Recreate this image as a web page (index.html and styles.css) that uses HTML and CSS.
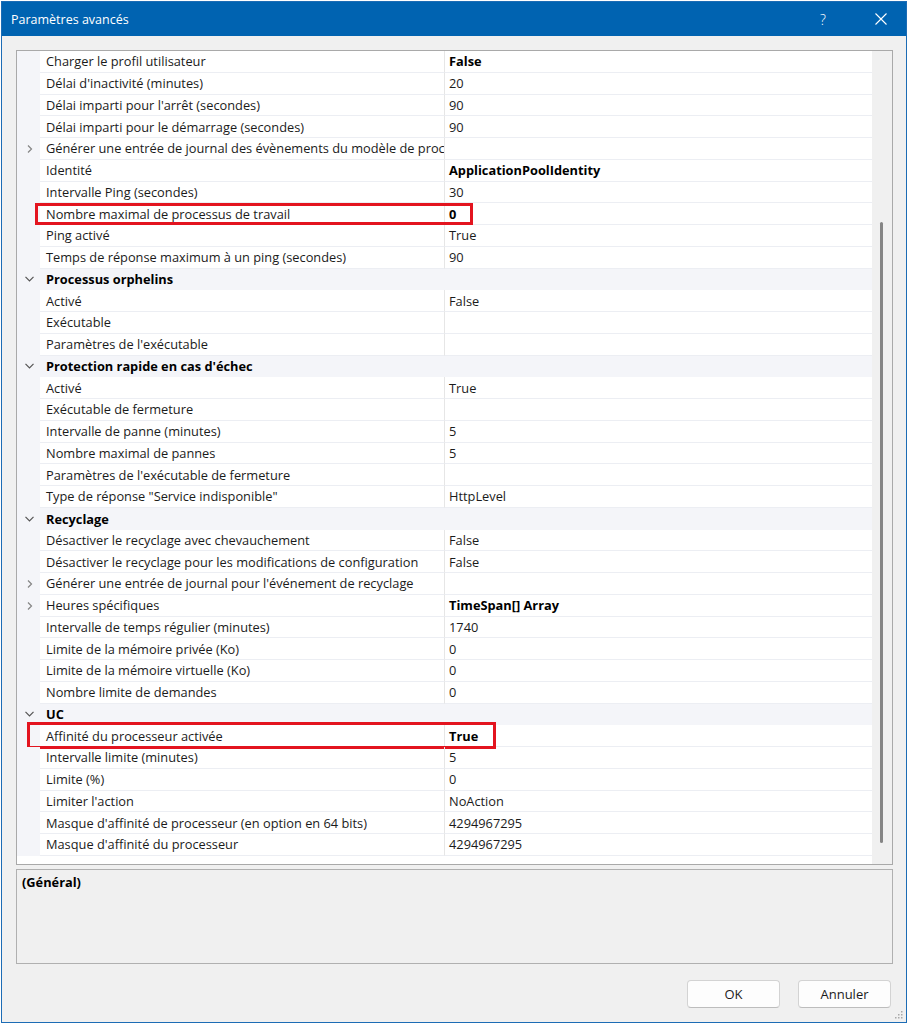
FILE: index.html
```html
<!DOCTYPE html>
<html lang="fr">
<head>
<meta charset="utf-8">
<title>Paramètres avancés</title>
<link rel="stylesheet" href="styles.css">
</head>
<body>
<div class="window">
  <div class="titlebar">
    <span class="title">Paramètres avancés</span>
    <span class="help">?</span>
    <span class="close"><svg width="12" height="12" viewBox="0 0 12 12"><path d="M0.5 0.5 L11.5 11.5 M11.5 0.5 L0.5 11.5" stroke="#fff" stroke-width="1.1" fill="none"/></svg></span>
  </div>
  <div class="content">
    <div class="grid">
      <div class="rows">
        <div class="row"><div class="gut"></div><div class="name">Charger le profil utilisateur</div><div class="val b">False</div></div>
        <div class="row"><div class="gut"></div><div class="name">Délai d'inactivité (minutes)</div><div class="val">20</div></div>
        <div class="row"><div class="gut"></div><div class="name">Délai imparti pour l'arrêt (secondes)</div><div class="val">90</div></div>
        <div class="row"><div class="gut"></div><div class="name">Délai imparti pour le démarrage (secondes)</div><div class="val">90</div></div>
        <div class="row"><div class="gut"><svg class="exp" width="6" height="8" viewBox="0 0 6 8"><path d="M1 0.5 L4.5 4 L1 7.5" stroke="#858585" stroke-width="1.2" fill="none"/></svg></div><div class="name">Générer une entrée de journal des évènements du modèle de proc</div><div class="val"></div></div>
        <div class="row"><div class="gut"></div><div class="name">Identité</div><div class="val b">ApplicationPoolIdentity</div></div>
        <div class="row"><div class="gut"></div><div class="name">Intervalle Ping (secondes)</div><div class="val">30</div></div>
        <div class="row mark1"><div class="gut"></div><div class="name">Nombre maximal de processus de travail</div><div class="val b">0</div></div>
        <div class="row"><div class="gut"></div><div class="name">Ping activé</div><div class="val">True</div></div>
        <div class="row"><div class="gut"></div><div class="name">Temps de réponse maximum à un ping (secondes)</div><div class="val">90</div></div>
        <div class="row cat"><div class="gut"><svg class="col" width="9" height="6" viewBox="0 0 9 6"><path d="M0.5 0.8 L4.5 4.8 L8.5 0.8" stroke="#555" stroke-width="1.2" fill="none"/></svg></div><div class="name">Processus orphelins</div></div>
        <div class="row"><div class="gut"></div><div class="name">Activé</div><div class="val">False</div></div>
        <div class="row"><div class="gut"></div><div class="name">Exécutable</div><div class="val"></div></div>
        <div class="row"><div class="gut"></div><div class="name">Paramètres de l'exécutable</div><div class="val"></div></div>
        <div class="row cat"><div class="gut"><svg class="col" width="9" height="6" viewBox="0 0 9 6"><path d="M0.5 0.8 L4.5 4.8 L8.5 0.8" stroke="#555" stroke-width="1.2" fill="none"/></svg></div><div class="name">Protection rapide en cas d'échec</div></div>
        <div class="row"><div class="gut"></div><div class="name">Activé</div><div class="val">True</div></div>
        <div class="row"><div class="gut"></div><div class="name">Exécutable de fermeture</div><div class="val"></div></div>
        <div class="row"><div class="gut"></div><div class="name">Intervalle de panne (minutes)</div><div class="val">5</div></div>
        <div class="row"><div class="gut"></div><div class="name">Nombre maximal de pannes</div><div class="val">5</div></div>
        <div class="row"><div class="gut"></div><div class="name">Paramètres de l'exécutable de fermeture</div><div class="val"></div></div>
        <div class="row"><div class="gut"></div><div class="name">Type de réponse "Service indisponible"</div><div class="val">HttpLevel</div></div>
        <div class="row cat"><div class="gut"><svg class="col" width="9" height="6" viewBox="0 0 9 6"><path d="M0.5 0.8 L4.5 4.8 L8.5 0.8" stroke="#555" stroke-width="1.2" fill="none"/></svg></div><div class="name">Recyclage</div></div>
        <div class="row"><div class="gut"></div><div class="name">Désactiver le recyclage avec chevauchement</div><div class="val">False</div></div>
        <div class="row"><div class="gut"></div><div class="name">Désactiver le recyclage pour les modifications de configuration</div><div class="val">False</div></div>
        <div class="row"><div class="gut"><svg class="exp" width="6" height="8" viewBox="0 0 6 8"><path d="M1 0.5 L4.5 4 L1 7.5" stroke="#858585" stroke-width="1.2" fill="none"/></svg></div><div class="name">Générer une entrée de journal pour l'événement de recyclage</div><div class="val"></div></div>
        <div class="row"><div class="gut"><svg class="exp" width="6" height="8" viewBox="0 0 6 8"><path d="M1 0.5 L4.5 4 L1 7.5" stroke="#858585" stroke-width="1.2" fill="none"/></svg></div><div class="name">Heures spécifiques</div><div class="val b">TimeSpan[] Array</div></div>
        <div class="row"><div class="gut"></div><div class="name">Intervalle de temps régulier (minutes)</div><div class="val">1740</div></div>
        <div class="row"><div class="gut"></div><div class="name">Limite de la mémoire privée (Ko)</div><div class="val">0</div></div>
        <div class="row"><div class="gut"></div><div class="name">Limite de la mémoire virtuelle (Ko)</div><div class="val">0</div></div>
        <div class="row"><div class="gut"></div><div class="name">Nombre limite de demandes</div><div class="val">0</div></div>
        <div class="row cat"><div class="gut"><svg class="col" width="9" height="6" viewBox="0 0 9 6"><path d="M0.5 0.8 L4.5 4.8 L8.5 0.8" stroke="#555" stroke-width="1.2" fill="none"/></svg></div><div class="name">UC</div></div>
        <div class="row mark2"><div class="gut"></div><div class="name">Affinité du processeur activée</div><div class="val b">True</div></div>
        <div class="row"><div class="gut"></div><div class="name">Intervalle limite (minutes)</div><div class="val">5</div></div>
        <div class="row"><div class="gut"></div><div class="name">Limite (%)</div><div class="val">0</div></div>
        <div class="row"><div class="gut"></div><div class="name">Limiter l'action</div><div class="val">NoAction</div></div>
        <div class="row"><div class="gut"></div><div class="name">Masque d'affinité de processeur (en option en 64 bits)</div><div class="val">4294967295</div></div>
        <div class="row"><div class="gut"></div><div class="name">Masque d'affinité du processeur</div><div class="val">4294967295</div></div>
      </div>
      <div class="scroll"><div class="thumb"></div></div>
    </div>
    <div class="desc"><span class="desc-title">(Général)</span></div>
    <div class="buttons">
      <button class="btn">OK</button>
      <button class="btn">Annuler</button>
    </div>
  </div>
  <svg class="grip" width="8" height="8" viewBox="0 0 8 8"><g fill="#a8a8a8"><rect x="6" y="0" width="1.5" height="1.5"/><rect x="3" y="3" width="1.5" height="1.5"/><rect x="6" y="3" width="1.5" height="1.5"/><rect x="0" y="6" width="1.5" height="1.5"/><rect x="3" y="6" width="1.5" height="1.5"/><rect x="6" y="6" width="1.5" height="1.5"/></g></svg>
</div>
</body>
</html>
```

FILE: styles.css
```css
html, body {
  margin: 0;
  padding: 0;
  background: #ffffff;
}
body {
  font-family: "Open Sans", "Noto Sans", "Liberation Sans", sans-serif;
  font-size: 12.8px;
  color: #1b1b1b;
}
.window {
  position: relative;
  margin: 1px 0 0 1px;
  width: 906px;
  height: 1022px;
  box-sizing: border-box;
  border: 1px solid #1c6cb5;
  background: #f0f0f0;
  display: flex;
  flex-direction: column;
}
.titlebar {
  height: 34px;
  flex: none;
  background: #0063b1;
  color: #ffffff;
  display: flex;
  align-items: center;
}
.title {
  margin-left: 9px;
  font-size: 12.5px;
  flex: 1;
}
.help {
  font-size: 14px;
  font-weight: 300;
  margin-right: 49px;
}
.close {
  display: flex;
  margin-right: 19px;
}
.content {
  flex: 1;
  display: flex;
  flex-direction: column;
  padding: 14px 13px 0 14px;
}
.grid {
  height: 815px;
  box-sizing: border-box;
  border: 1px solid #a9a9a9;
  background: #ffffff;
  display: flex;
}
.rows {
  width: 855px;
  display: flex;
  flex-direction: column;
}
.row {
  position: relative;
  height: 21.75px;
  flex: none;
  display: flex;
  align-items: stretch;
}
.gut {
  width: 23px;
  flex: none;
  background: #f4f5f9;
  display: flex;
  align-items: center;
  padding-left: 10px;
  box-sizing: border-box;
}
.name {
  width: 405px;
  flex: none;
  box-sizing: border-box;
  padding-left: 6px;
  border-bottom: 1px solid #eceef3;
  border-right: 1px solid #e6e6e6;
  white-space: nowrap;
  overflow: hidden;
  display: flex;
  align-items: center;
}
.val {
  flex: 1;
  padding-left: 4px;
  border-bottom: 1px solid #eceef3;
  white-space: nowrap;
  display: flex;
  align-items: center;
}
.b {
  font-weight: 700;
  color: #000;
}
.cat {
  background: #f4f5f9;
}
.cat .name {
  flex: 1;
  font-weight: 700;
  color: #000;
  border-right: none;
  border-bottom: none;
}
.cat .gut {
  padding-left: 8px;
}
.mark1::after,
.mark2::after {
  content: "";
  position: absolute;
  border: 3px solid #e3141f;
  box-sizing: border-box;
  pointer-events: none;
}
.mark1::after {
  left: 18px;
  top: 0;
  width: 438px;
  height: 22px;
}
.mark2::after {
  left: 10px;
  top: -3px;
  width: 469px;
  height: 27px;
}
.scroll {
  flex: 1;
  background: #f0f0f0;
  padding: 171px 0 0 8px;
  box-sizing: border-box;
}
.thumb {
  width: 3px;
  height: 621px;
  background: #858585;
  border-radius: 2px;
}
.desc {
  margin-top: 4px;
  height: 95px;
  box-sizing: border-box;
  border: 1px solid #b0b0b0;
  background: #f0f0f0;
  padding: 3px 5px;
}
.desc-title {
  font-weight: 700;
  color: #000;
}
.buttons {
  margin-top: 16px;
  display: flex;
  justify-content: flex-end;
  gap: 18px;
  padding-right: 2px;
}
.btn {
  width: 93px;
  height: 28px;
  box-sizing: border-box;
  border: 1px solid #d3d3d3;
  border-bottom-color: #bdbdbd;
  border-radius: 4px;
  background: #fdfdfd;
  font-family: inherit;
  font-size: 13px;
  color: #1b1b1b;
  padding: 0;
}
.grip {
  position: absolute;
  right: 3px;
  bottom: 3px;
}
```
